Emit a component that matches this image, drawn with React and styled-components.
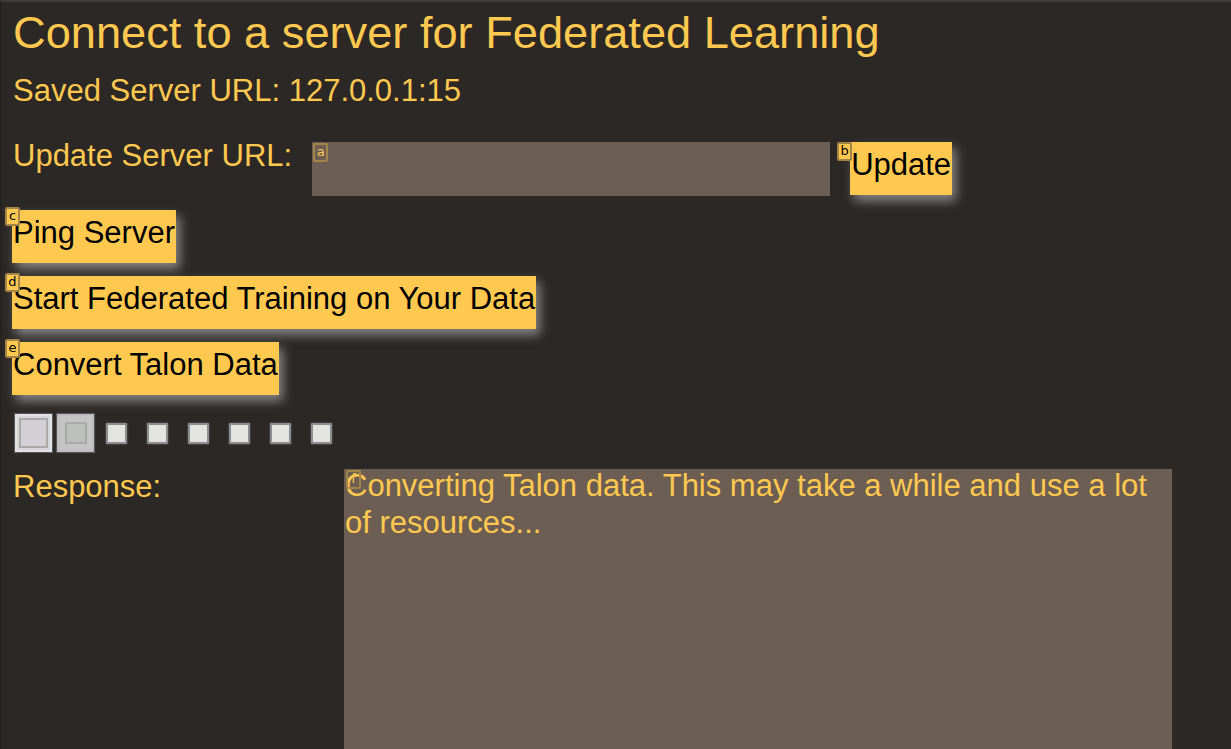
import React from 'react'
import styled, { createGlobalStyle } from 'styled-components'

const GlobalStyle = createGlobalStyle`
	html, body {
		margin: 0;
		background: #2c2826;
	}
	body {
		font-family: "Liberation Sans", Arial, sans-serif;
		color: #ffc94f;
	}
`

const Page = styled.div`
	border-top: 2px solid #3e3c3b;
	border-left: 2px solid #262321;
	padding: 0 0 0 10px;
	overflow: hidden;
	box-sizing: border-box;
	height: 749px;
`

const Title = styled.h1`
	margin: 5px 0 0 1px;
	font-size: 45.2px;
	font-weight: normal;
	line-height: 52px;
`

const Saved = styled.div`
	margin: 14px 0 0 1px;
	font-size: 31px;
	line-height: 36px;
`

const UrlRow = styled.div`
	display: flex;
	align-items: flex-start;
	margin: 29px 0 0 1px;
`

const Label = styled.div`
	font-size: 31px;
	line-height: 36px;
	white-space: nowrap;
`

const Field = styled.div`
	position: relative;
	width: 518px;
	height: 54px;
	margin: 4px 20px 0 20px;
	background: #6d5e53;
`

const Hint = styled.span`
	position: absolute;
	top: ${p => p.$top ?? -3}px;
	left: ${p => p.$left ?? -7}px;
	width: 11px;
	height: 15px;
	border: 2px solid #a3854a;
	border-radius: 2px;
	background: ${p => (p.$dark ? 'transparent' : '#ffc94f')};
	color: ${p => (p.$dark ? '#ffc94f' : '#000')};
	font-size: 13px;
	line-height: 14px;
	text-align: center;
	font-family: "DejaVu Sans", sans-serif;
`

const Button = styled.div`
	position: relative;
	display: inline-block;
	height: 53px;
	padding: 0 1px;
	background: #ffc94f;
	color: #000;
	font-size: 31px;
	line-height: 46px;
	white-space: nowrap;
	box-shadow: 4px 6px 10px rgba(210, 210, 210, 0.55);
	margin-top: ${p => p.$mt ?? 0}px;
`

const ButtonStack = styled.div`
	display: flex;
	flex-direction: column;
	align-items: flex-start;
	gap: 13px;
	margin-top: 14px;
`

const Boxes = styled.div`
	display: flex;
	align-items: center;
	margin: 19px 0 0 3px;
`

const BigBox = styled.div`
	width: 29px;
	height: 30px;
	border: 2px solid ${p => (p.$pressed ? '#bdbdbd' : '#e3e3e3')};
	background: ${p => (p.$pressed ? '#c4c4c4' : '#d6d6d6')};
	display: flex;
	align-items: center;
	justify-content: center;
	margin-right: 5px;
	box-shadow: 0 0 1px 1px #555;
	padding: 2px;
	&::after {
		content: '';
		width: ${p => (p.$pressed ? 18 : 25)}px;
		height: ${p => (p.$pressed ? 18 : 26)}px;
		border: 2px solid #a9a9a9;
		background: ${p => (p.$pressed ? '#bdc0bc' : '#d2d0d4')};
	}
`

const SmallBoxes = styled.div`
	display: flex;
	gap: 20px;
	margin-left: 7px;
`

const SmallBox = styled.div`
	width: 17px;
	height: 17px;
	background: #e3e4e2;
	border: 2px solid #8e8e8e;
	border-radius: 1px;
	box-shadow: 0 0 2px #777;
`

const ResponseRow = styled.div`
	display: grid;
	grid-template-columns: 331px 828px;
	margin: 17px 0 0 1px;
`

const ResponseBox = styled.div`
	position: relative;
	height: 300px;
	background: #6d5e53;
	padding: 0 14px 0 1px;
`

const ResponseText = styled.div`
	margin-top: -2px;
	font-size: 31px;
	line-height: 37px;
`

function App() {
	return (
		<Page>
			<GlobalStyle />
			<Title>Connect to a server for Federated Learning</Title>
			<Saved>Saved Server URL: 127.0.0.1:15</Saved>
			<UrlRow>
				<Label>Update Server URL:</Label>
				<Field>
					<Hint $dark $left={1} $top={1}>a</Hint>
				</Field>
				<Button $mt={4}>
					<Hint $left={-13} $top={0}>b</Hint>
					Update
				</Button>
			</UrlRow>
			<ButtonStack>
				<Button>
					<Hint>c</Hint>
					Ping Server
				</Button>
				<Button>
					<Hint>d</Hint>
					Start Federated Training on Your Data
				</Button>
				<Button>
					<Hint>e</Hint>
					Convert Talon Data
				</Button>
			</ButtonStack>
			<Boxes>
				<BigBox />
				<BigBox $pressed />
				<SmallBoxes>
					{[0, 1, 2, 3, 4, 5].map(i => (
						<SmallBox key={i} />
					))}
				</SmallBoxes>
			</Boxes>
			<ResponseRow>
				<Label>Response:</Label>
				<ResponseBox>
					<Hint $dark $left={2} $top={1}>f</Hint>
					<ResponseText>
						Converting Talon data. This may take a while and use a lot of resources...
					</ResponseText>
				</ResponseBox>
			</ResponseRow>
		</Page>
	)
}

export default App
